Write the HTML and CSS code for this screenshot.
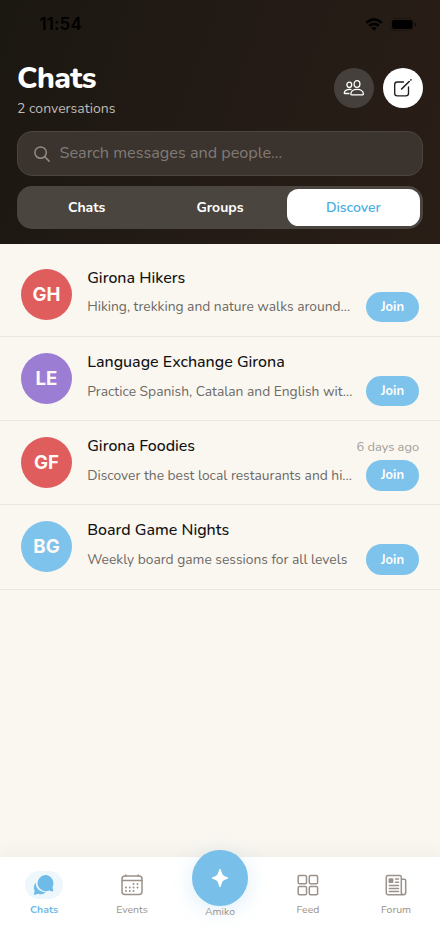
FILE: index.html
```html
<!DOCTYPE html>
<html lang="en">
<head>
<meta charset="utf-8">
<title>Chats</title>
<link rel="stylesheet" href="styles.css">
</head>
<body>
<div class="app">
  <header class="header">
    <div class="status">
      <span class="time">11:54</span>
      <span class="status-icons">
        <svg width="18" height="13" viewBox="0 0 18 13" fill="none" stroke="#000" stroke-width="2.5"><path d="M1.200 4.700Q9-2 16.800 4.700M4.100 7.900q4.900-4 9.800 0"/><path d="M9 12.800 6.100 10q2.900-2.200 5.800 0z" fill="#000" stroke="none"/></svg>
        <svg width="27" height="13" viewBox="0 0 27 13"><rect x=".5" y=".5" width="23" height="12" rx="3.500" fill="none" stroke="#1b1510"/><rect x="2" y="2" width="20.500" height="9" rx="2" fill="#000"/><path d="M25 4q2 2.500 0 5z" fill="#0b0806"/></svg>
      </span>
    </div>
    <div class="heading">
      <div>
        <h1 class="title">Chats</h1>
        <p class="subtitle">2 conversations</p>
      </div>
      <div class="actions">
        <button class="round" aria-label="People">
          <svg width="22" height="18" viewBox="0 0 22 18" fill="none" stroke="#fff" stroke-width="1.300"><ellipse cx="14" cy="5" rx="2.900" ry="3.300"/><path d="M7.800 15.300c0-6.500 12.600-6.500 12.600 0q0 .5-.6.500H8.400q-.6 0-.6-.5z"/><ellipse cx="6.300" cy="5.800" rx="2.400" ry="2.700"/><path d="M8.500 10.700C5.500 9.700 1.300 11 1.200 14q0 .5.600.5h4.700"/></svg>
        </button>
        <button class="round light" aria-label="New message">
          <svg width="20" height="20" viewBox="0 0 20 20" fill="none" stroke="#211d1c" stroke-width="1.350" stroke-linecap="round" stroke-linejoin="round"><path d="M10.500 4H4.300Q1.700 4 1.700 6.600v8.600q0 2.600 2.600 2.600h8.600q2.600 0 2.600-2.600V9"/><path d="m8.600 11 7.600-7.500" stroke-width="1.600"/><path d="m17.800 2 .2-.2" stroke-width="1.600"/></svg>
        </button>
      </div>
    </div>
    <div class="search">
      <svg width="18" height="18" viewBox="0 0 18 18" fill="none" stroke="#908b86" stroke-width="1.500" stroke-linecap="round"><circle cx="7.600" cy="7.600" r="5.700"/><path d="m11.900 11.900 4.200 4.200"/></svg>
      <span class="placeholder">Search messages and people...</span>
    </div>
    <nav class="tabs">
      <span class="tab">Chats</span>
      <span class="tab">Groups</span>
      <span class="tab active">Discover</span>
    </nav>
  </header>

  <main class="list">
    <article class="row">
      <div class="avatar red">GH</div>
      <div class="body">
        <div class="line"><h2 class="name">Girona Hikers</h2></div>
        <div class="line second"><p class="desc">Hiking, trekking and nature walks around...</p><button class="join">Join</button></div>
      </div>
    </article>
    <article class="row">
      <div class="avatar purple">LE</div>
      <div class="body">
        <div class="line"><h2 class="name">Language Exchange Girona</h2></div>
        <div class="line second"><p class="desc">Practice Spanish, Catalan and English wit...</p><button class="join">Join</button></div>
      </div>
    </article>
    <article class="row">
      <div class="avatar red">GF</div>
      <div class="body">
        <div class="line"><h2 class="name">Girona Foodies</h2><time class="ago">6 days ago</time></div>
        <div class="line second"><p class="desc">Discover the best local restaurants and hi...</p><button class="join">Join</button></div>
      </div>
    </article>
    <article class="row">
      <div class="avatar blue">BG</div>
      <div class="body">
        <div class="line"><h2 class="name">Board Game Nights</h2></div>
        <div class="line second"><p class="desc">Weekly board game sessions for all levels</p><button class="join">Join</button></div>
      </div>
    </article>
  </main>

  <nav class="bottom">
    <a class="item current">
      <span class="pill"><svg width="22" height="22" viewBox="0 0 22 22" fill="#6fbbe8"><path d="M12.200 1a8.200 8.200 0 0 1 7.500 11.500c-.5 1.200.4 3 .6 4 .1.700-.4 1-1 .9l-3-.8A8.200 8.200 0 1 1 12.200 1z"/><path d="M2.900 8.500c-.8 4.900 3.600 9.600 9.600 9.700-2 2.200-4.800 2.600-7.200 1.600-1.200.4-2.400 1-3.700.9-.7 0-.8-.5-.6-1 .5-1.300.7-2 .4-3.400C.300 13.600.900 10.500 2.900 8.500z"/></svg></span>
      <span class="label">Chats</span>
    </a>
    <a class="item">
      <span class="pill"><svg width="22" height="22" viewBox="0 0 22 22" fill="none" stroke="#9b928b" stroke-width="1.500" stroke-linecap="round"><rect x="1" y="2" width="20" height="18.500" rx="3"/><path d="M1 6.500h20M4.800 1v1M17.200 1v1"/><path d="M12.500 10h.01M16.500 10h.01M5 13.500h.01M8.800 13.500h.01M12.500 13.500h.01M16.500 13.500h.01M5 17h.01M8.800 17h.01M12.500 17h.01" stroke-width="2"/></svg></span>
      <span class="label">Events</span>
    </a>
    <a class="item center">
      <span class="orb"><svg width="18" height="20" viewBox="0 0 18 20" fill="#fff"><path d="M9 1c.5 0 .8.500 1.100 1.500C11.200 6.700 12 7.700 15.700 8.900q1.700.5 1.700 1.100t-1.700 1.100c-3.700 1.200-4.500 2.200-5.600 6.400-.3 1-.6 1.500-1.100 1.500s-.8-.5-1.100-1.500C6.800 13.300 6 12.300 2.300 11.100Q.6 10.600.6 10t1.700-1.100C6 7.700 6.800 6.700 7.900 2.500 8.200 1.500 8.500 1 9 1z"/></svg></span>
      <span class="label">Amiko</span>
    </a>
    <a class="item">
      <span class="pill"><svg width="22" height="22" viewBox="0 0 22 22" fill="none" stroke="#9b928b" stroke-width="1.500"><rect x="1.200" y="1.400" width="8.300" height="8.300" rx="1.300"/><rect x="12.300" y="1.400" width="8.300" height="8.300" rx="1.300"/><rect x="1.200" y="12.500" width="8.300" height="8.300" rx="1.300"/><rect x="12.300" y="12.500" width="8.300" height="8.300" rx="1.300"/></svg></span>
      <span class="label">Feed</span>
    </a>
    <a class="item">
      <span class="pill"><svg width="22" height="22" viewBox="0 0 22 22" fill="none" stroke="#9b928b" stroke-width="1.500" stroke-linecap="round"><path d="M18.500 20.800H3.500q-2.200 0-2.200-2.200V3q0-1.500 1.500-1.500h12q1.500 0 1.500 1.500v15.600q0 2.200 2.200 2.200t2.200-2.200V6.700q0-1.500-1.500-1.500h-2.900"/><rect x="4.300" y="4.900" width="3.400" height="3.400" fill="#9b928b" rx=".4"/><path d="M10.500 5h3M10.500 8.200h3M4.300 11.400h9.200M4.300 14.400h9.200M4.300 17.400h9.200"/></svg></span>
      <span class="label">Forum</span>
    </a>
  </nav>
</div>
</body>
</html>
```
FILE: styles.css
```css
* { box-sizing: border-box; }
body { margin: 0; font-family: Nunito, Lato, "Noto Sans", sans-serif; background: #faf7f1; color: #111; }
h1, h2, p { margin: 0; }
button { border: 0; padding: 0; font-family: inherit; }
svg { display: block; flex: none; }
.app { width: 440px; height: 952px; display: flex; flex-direction: column; overflow: hidden; }

.header { height: 243.500px; flex: none; padding: 0 17px; background: linear-gradient(110deg, #1b1711 0%, #241b16 55%, #291e16 100%); color: #fff; }
.status { height: 48px; padding: 0 6px 0 22.500px; display: flex; align-items: center; justify-content: space-between; color: #000; }
.time { font: 600 17px/20px Inter, sans-serif; letter-spacing: .1px; }
.status-icons { display: flex; gap: 7px; align-items: center; }
.heading { height: 83px; display: flex; justify-content: space-between; }
.title { padding-top: 13px; font-size: 30px; line-height: 36px; font-weight: 800; letter-spacing: -.6px; }
.subtitle { margin-top: 2px; font-size: 14px; line-height: 19px; color: #bfbab5; }
.actions { display: flex; gap: 8.500px; padding-top: 19.500px; }
.round { width: 40.500px; height: 40.500px; border-radius: 50%; background: #45403b; display: flex; align-items: center; justify-content: center; color: #fff; }
.round.light { background: #fff; }
.search { height: 45px; padding-left: 15px; display: flex; align-items: center; gap: 8.500px; border: 1px solid #4b453f; border-radius: 15px; background: #3a332e; }
.placeholder { font-size: 16.200px; line-height: 22px; margin-top: -1px; color: #817b76; }
.tabs { height: 42.500px; margin-top: 10.300px; padding: 3px 3px; display: flex; border-radius: 15px; background: #4a453f; }
.tab { flex: 1; display: flex; align-items: center; justify-content: center; border-radius: 11.500px; font-size: 14px; font-weight: 700; }
.tab.active { background: #fff; color: #4aaee2; font-weight: 600; }

.list { flex: 1; padding-top: 8.900px; background: #faf7f1; }
.row { height: 84.300px; padding: 0 21px; display: flex; gap: 15.200px; align-items: center; border-bottom: 1px solid #eae7e1; }
.avatar { width: 51px; height: 51px; flex: none; border-radius: 50%; display: flex; align-items: center; justify-content: center; font: 700 18.700px Inter, sans-serif; color: #fffaf8; }
.red { background: #df5d5d; }
.purple { background: #9b7dd4; }
.blue { background: #7ec3eb; }
.body { flex: 1; min-width: 0; padding-bottom: 2.400px; }
.line { display: flex; height: 28px; align-items: center; justify-content: space-between; }
.second { height: 30.500px; }
.name { font-size: 16px; line-height: 22px; font-weight: 500; white-space: nowrap; }
.desc { font-size: 13.800px; color: #6d6965; white-space: nowrap; }
.ago { font-size: 12.800px; padding-top: 2px; color: #a29d98; }
.join { width: 53px; height: 30.500px; border-radius: 16px; background: #7ec3eb; color: #fff; font-size: 13px; font-weight: 700; flex: none; }

.bottom { height: 95px; flex: none; display: grid; grid-template-columns: repeat(5, 88px); background: #fff; box-shadow: 0 -4px 16px rgba(80, 60, 30, .055); }
.item { display: flex; flex-direction: column; align-items: center; padding-top: 14px; color: #9b928b; }
.pill { width: 38px; height: 28px; display: flex; align-items: center; justify-content: center; border-radius: 14px; }
.current { color: #6fbbe8; }
.current .pill { background: #edf7fc; }
.label { margin-top: 3px; font-size: 10.500px; line-height: 15px; }
.current .label { font-weight: 700; }
.center { padding-top: 0; }
.orb { width: 55.500px; height: 55.500px; margin-top: -7px; flex: none; display: flex; align-items: center; justify-content: center; border-radius: 50%; background: #78bfe9; box-shadow: 0 4px 20px rgba(120, 191, 233, .25); }
.center .label { margin-top: -2px; }
```
